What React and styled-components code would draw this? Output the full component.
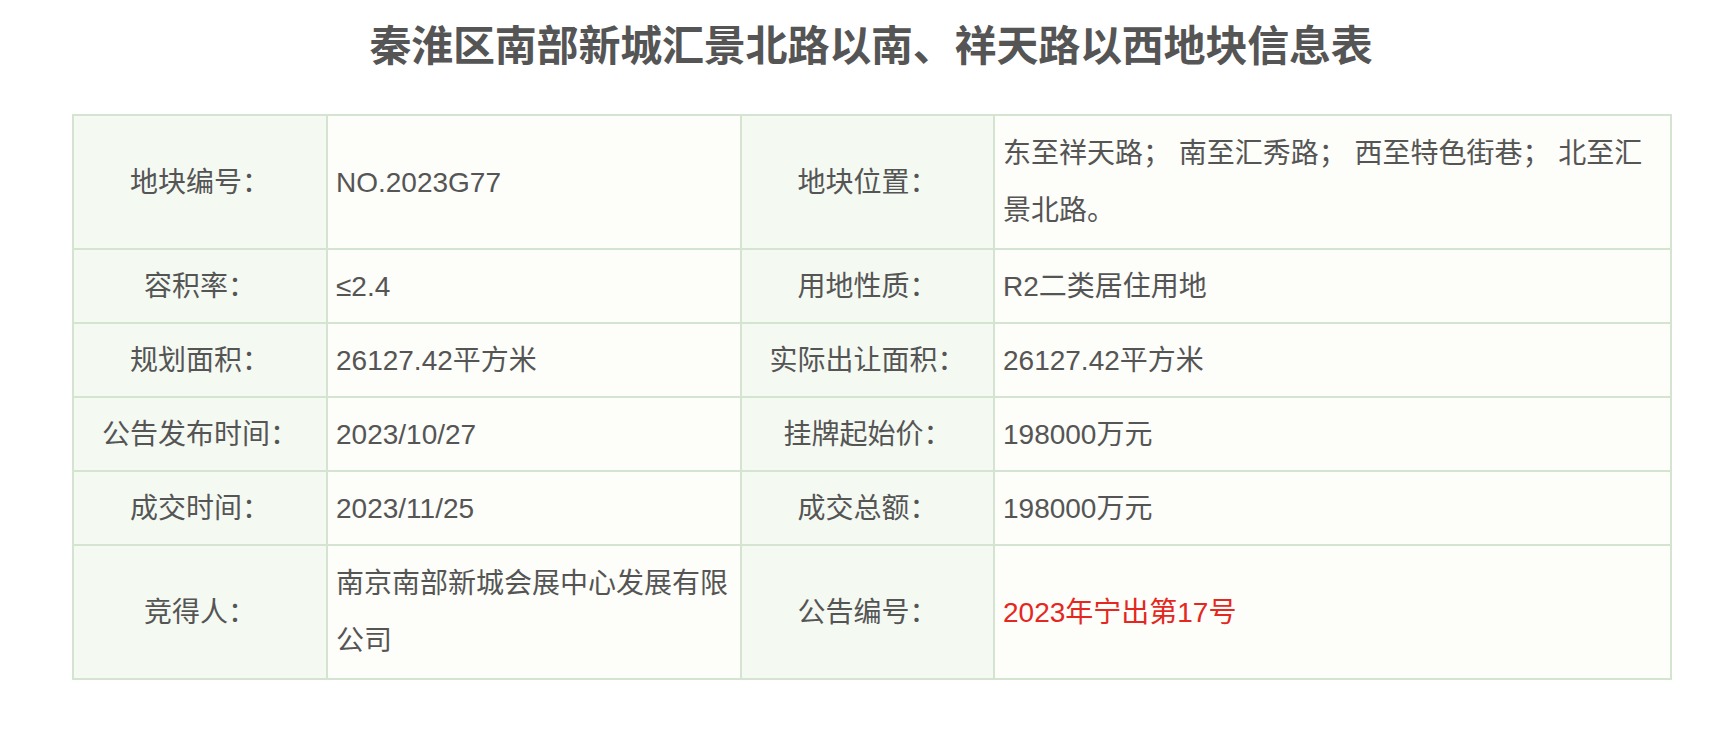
import React from "react";
import styled, { createGlobalStyle } from "styled-components";

const GlobalStyle = createGlobalStyle`
  html, body {
    margin: 0;
    padding: 0;
    background: #ffffff;
  }
  body {
    font-family: "Liberation Sans", "Noto Sans CJK SC", sans-serif;
    color: #555555;
  }
`;

const Page = styled.div`
  padding: 15px 56px 40px 72px;
`;

const Title = styled.h1`
  margin: 0 0 43px 0;
  text-align: center;
  font-family: "Noto Sans CJK SC", sans-serif;
  font-weight: 700;
  font-size: 42px;
  line-height: 56px;
  color: #555555;
  letter-spacing: -0.2px;
`;

const Table = styled.table`
  width: 1598px;
  border-collapse: collapse;
  table-layout: fixed;
  border: 2px solid #d5e4d0;
`;

const Row = styled.tr`
  height: ${(p) => (p.$tall ? "134px" : "74px")};
`;

const Cell = styled.td`
  border: 2px solid #d5e4d0;
  padding: 7px 8px;
  font-size: 28px;
  line-height: 57px;
  vertical-align: middle;
  word-break: break-all;
`;

const Label = styled(Cell)`
  background: #f4f9f2;
  text-align: center;
  color: #555555;
`;

const Value = styled(Cell)`
  background: #fdfdf9;
  text-align: left;
  color: ${(p) => (p.$accent ? "#e4271f" : "#555555")};
`;

const rows = [
  {
    tall: true,
    a: ["地块编号：", "NO.2023G77"],
    b: ["地块位置：", "东至祥天路； 南至汇秀路； 西至特色街巷； 北至汇景北路。"],
  },
  { a: ["容积率：", "≤2.4"], b: ["用地性质：", "R2二类居住用地"] },
  { a: ["规划面积：", "26127.42平方米"], b: ["实际出让面积：", "26127.42平方米"] },
  { a: ["公告发布时间：", "2023/10/27"], b: ["挂牌起始价：", "198000万元"] },
  { a: ["成交时间：", "2023/11/25"], b: ["成交总额：", "198000万元"] },
  {
    tall: true,
    a: ["竞得人：", "南京南部新城会展中心发展有限公司"],
    b: ["公告编号：", "2023年宁出第17号"],
    accentB: true,
  },
];

export default function App() {
  return (
    <>
      <GlobalStyle />
      <Page>
        <Title>秦淮区南部新城汇景北路以南、祥天路以西地块信息表</Title>
        <Table>
          <colgroup>
            <col style={{ width: 254 }} />
            <col style={{ width: 414 }} />
            <col style={{ width: 253 }} />
            <col style={{ width: 677 }} />
          </colgroup>
          <tbody>
            {rows.map((r, i) => (
              <Row key={i} $tall={r.tall}>
                <Label>{r.a[0]}</Label>
                <Value>{r.a[1]}</Value>
                <Label>{r.b[0]}</Label>
                <Value $accent={r.accentB}>{r.b[1]}</Value>
              </Row>
            ))}
          </tbody>
        </Table>
      </Page>
    </>
  );
}
